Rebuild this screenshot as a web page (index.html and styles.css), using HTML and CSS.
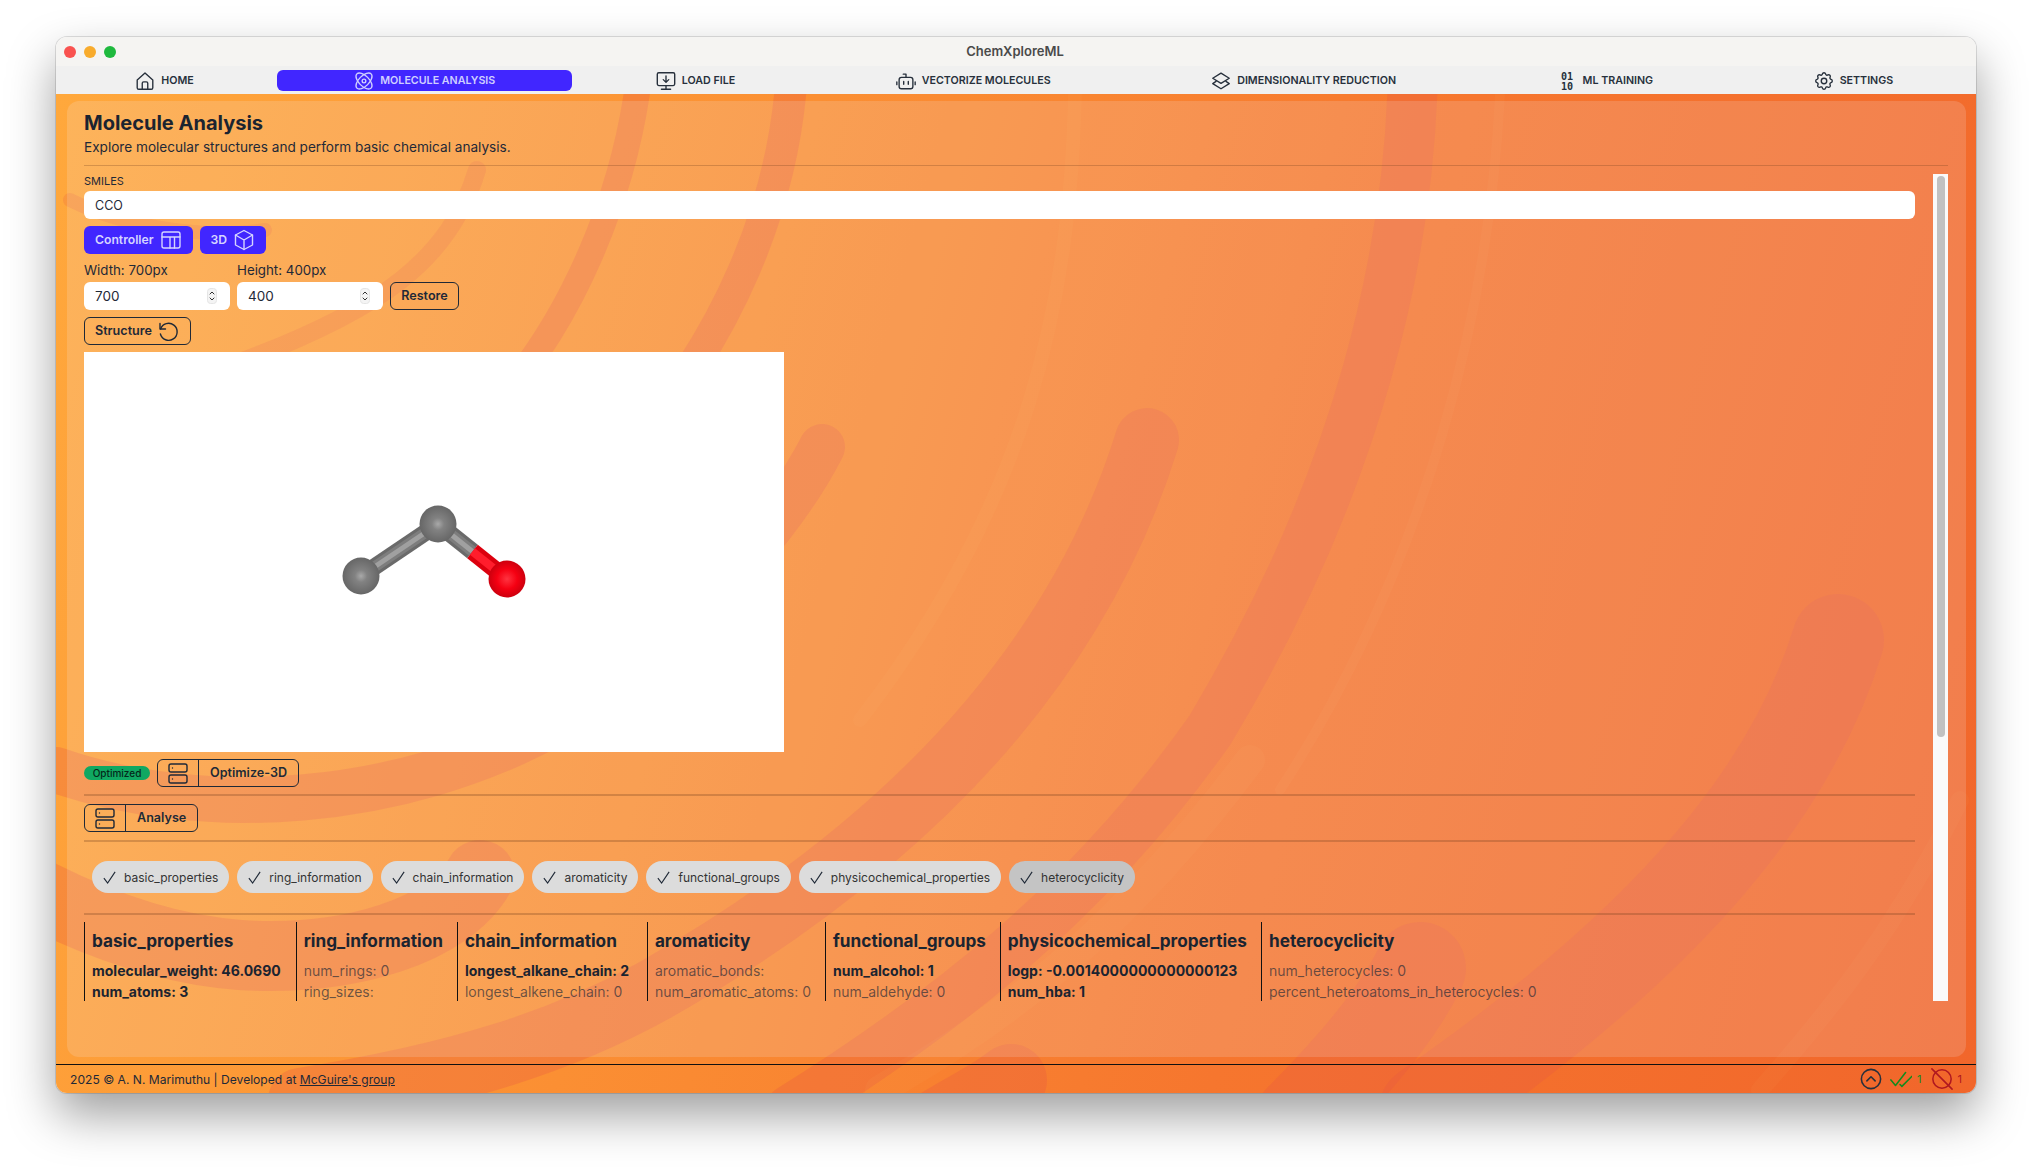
FILE: index.html
```html
<!DOCTYPE html>
<html lang="en">
<head>
<meta charset="utf-8">
<title>ChemXploreML</title>
<link rel="stylesheet" href="styles.css">
</head>
<body>
<div class="window">
  <header class="titlebar">
    <div class="lights"><span class="light red"></span><span class="light amber"></span><span class="light green"></span></div>
    <div class="wintitle">ChemXploreML</div>
  </header>
  <nav class="tabs">
    <a class="tab">
      <svg class="tab-ico" viewBox="0 0 24 24"><path d="M3.500 11 12 3.200 20.500 11v8.300a1.700 1.700 0 0 1-1.700 1.700H5.200a1.700 1.700 0 0 1-1.700-1.700z"/><path d="M9 21v-6.500a1.500 1.500 0 0 1 1.500-1.500h3a1.500 1.500 0 0 1 1.500 1.500V21"/></svg>
      <span>Home</span>
    </a>
    <a class="tab active">
      <svg class="tab-ico" viewBox="0 0 24 24"><ellipse cx="12" cy="12" rx="5.600" ry="11" transform="rotate(45 12 12)"/><ellipse cx="12" cy="12" rx="5.600" ry="11" transform="rotate(-45 12 12)"/><circle cx="12" cy="12" r="2"/></svg>
      <span>Molecule Analysis</span>
    </a>
    <a class="tab">
      <svg class="tab-ico" viewBox="0 0 24 24"><rect x="2.500" y="3" width="19" height="14" rx="1.600"/><path d="M12 6.500v6.500M9 10.500l3 3 3-3M12 17v4M7 21h10"/></svg>
      <span>Load file</span>
    </a>
    <a class="tab">
      <svg class="tab-ico" viewBox="0 0 24 24"><rect x="4.500" y="8" width="15" height="12.500" rx="2.500"/><path d="M12 8V4.500H9M2 13v3M22 13v3M9.500 12.500v3M14.500 12.500v3"/></svg>
      <span>Vectorize Molecules</span>
    </a>
    <a class="tab">
      <svg class="tab-ico" viewBox="0 0 24 24"><path d="M12 3.500 21 9l-9 5.500L3 9z"/><path d="M6.600 12.400 3 14.800l9 5.700 9-5.700-3.600-2.400"/></svg>
      <span>Dimensionality Reduction</span>
    </a>
    <a class="tab">
      <svg class="tab-ico" viewBox="0 0 24 24"><text class="bin" x="12" y="10.500">01</text><text class="bin" x="12" y="21.500">10</text></svg>
      <span>ML Training</span>
    </a>
    <a class="tab">
      <svg class="tab-ico" viewBox="0 0 24 24"><path d="M10.300 4.300c.4-1.800 3-1.800 3.400 0a1.700 1.700 0 0 0 2.600 1.100c1.500-.9 3.300.8 2.400 2.400a1.700 1.700 0 0 0 1 2.500c1.800.5 1.800 3 0 3.400a1.700 1.700 0 0 0-1 2.600c.9 1.500-.9 3.300-2.400 2.400a1.700 1.700 0 0 0-2.600 1c-.4 1.800-3 1.800-3.400 0a1.700 1.700 0 0 0-2.600-1c-1.500.9-3.300-.9-2.400-2.400a1.700 1.700 0 0 0-1-2.600c-1.800-.4-1.800-3 0-3.400a1.700 1.700 0 0 0 1-2.500c-.9-1.600.9-3.300 2.400-2.400a1.700 1.700 0 0 0 2.600-1.100z"/><circle cx="12" cy="12" r="3"/></svg>
      <span>Settings</span>
    </a>
  </nav>
  <div class="stage">
    <svg class="swirls" viewBox="56 94 1920 999" preserveAspectRatio="none" aria-hidden="true">
      <g class="sw-dark">
        <path stroke-width="64" d="M1147 440C1085 640 935 830 655 990 565 1040 460 1075 300 1100"/>
        <path stroke-width="92" d="M1838 640C1795 780 1685 930 1425 1110"/>
        <path stroke-width="50" d="M1413 70C1410 250 1360 480 1210 730 1090 900 950 1010 790 1110"/>
        <path stroke-width="26" d="M640 70C625 200 570 320 500 400"/>
        <path stroke-width="32" d="M792 70C785 200 730 340 620 460"/>
        <path stroke-width="46" d="M822 447C785 520 685 640 560 720 400 810 200 820 56 770"/>
        <path stroke-width="70" d="M480 875C450 930 350 962 240 955 170 950 100 925 40 895"/>
        <path stroke-width="92" d="M1420 968C1395 1020 1340 1080 1300 1120"/>
        <path stroke-width="72" d="M1011 1080C985 1100 960 1110 930 1130"/>
      </g>
      <g class="sw-faint">
        <path stroke-width="18" d="M477 170C450 260 380 310 240 362"/>
        <path stroke-width="14" d="M70 200C120 225 200 240 265 230"/>
      </g>
      <g class="sw-light">
        <path stroke-width="14" d="M1075 94C1070 300 1030 500 860 720"/>
        <path stroke-width="10" d="M1500 94C1490 300 1430 560 1280 790"/>
        <path stroke-width="18" d="M1960 800C1900 920 1840 1000 1760 1090"/>
        <path stroke-width="30" d="M1250 760C1130 920 1020 1010 880 1090"/>
      </g>
    </svg>
    <main class="panel">
      <h1 class="page-title">Molecule Analysis</h1>
      <p class="page-sub">Explore molecular structures and perform basic chemical analysis.</p>
      <hr class="rule">
      <div class="scroll-wrap">
        <div class="scroll">
          <label class="mini-label">SMILES</label>
          <input class="smiles" type="text" value="CCO">
          <div class="row top-btns">
            <button class="btn primary">Controller
              <svg class="btn-ico" viewBox="0 0 24 24"><rect x="3" y="4" width="18" height="16" rx="2"/><path d="M3 9h18M11 9v11M15.500 9v11"/></svg>
            </button>
            <button class="btn primary">3D
              <svg class="btn-ico" viewBox="0 0 24 24"><path d="M12 2.500 20.500 7v10L12 21.500 3.500 17V7z"/><path d="M3.500 7 12 12l8.500-5M12 12v9.500"/></svg>
            </button>
          </div>
          <div class="dims">
            <div class="dim">
              <label class="dim-label">Width: 700px</label>
              <div class="num"><input type="text" value="700"><svg class="spin" viewBox="0 0 10 16"><rect x=".5" y=".5" width="9" height="15" rx="3"/><path d="M3 6l2-2 2 2M3 10l2 2 2-2"/></svg></div>
            </div>
            <div class="dim">
              <label class="dim-label">Height: 400px</label>
              <div class="num"><input type="text" value="400"><svg class="spin" viewBox="0 0 10 16"><rect x=".5" y=".5" width="9" height="15" rx="3"/><path d="M3 6l2-2 2 2M3 10l2 2 2-2"/></svg></div>
            </div>
            <button class="btn outline">Restore</button>
          </div>
          <div class="row">
            <button class="btn outline structure">Structure
              <svg class="btn-ico dark" viewBox="0 0 24 24"><path d="M4 4.500v5.500h5.500"/><path d="M4.600 10a8.500 8.500 0 1 1-.2 5"/></svg>
            </button>
          </div>
          <div class="viewer">
            <svg class="mol" viewBox="0 0 700 400">
              <defs>
                <radialGradient id="c" cx=".5" cy=".5" r=".55"><stop offset="0" stop-color="#a9a9a9"/><stop offset=".3" stop-color="#828282"/><stop offset="1" stop-color="#626262"/></radialGradient>
                <radialGradient id="o" cx=".5" cy=".5" r=".55"><stop offset="0" stop-color="#ff3340"/><stop offset=".5" stop-color="#f50012"/><stop offset="1" stop-color="#c4000d"/></radialGradient>
              </defs>
              <g class="bond b1"><path d="M277 224 354 172"/><path d="M354 172 388.500 199.500"/></g>
              <g class="bond b2"><path d="M277 224 354 172"/><path d="M354 172 388.500 199.500"/></g>
              <g class="bond b3"><path d="M277 224 354 172"/><path d="M354 172 388.500 199.500"/></g>
              <path class="bond-red r-a" d="M388.500 199.500 423 227"/>
              <path class="bond-red r-b" d="M388.500 199.500 423 227"/>
              <circle cx="277" cy="224" r="18.500" fill="url(#c)"/>
              <circle cx="354" cy="172" r="18.500" fill="url(#c)"/>
              <circle cx="423" cy="227" r="18.500" fill="url(#o)"/>
            </svg>
          </div>
          <div class="row opt">
            <span class="badge">Optimized</span>
            <button class="join">
              <span class="join-ico"><svg class="srv" viewBox="0 0 24 24"><rect x="3" y="3" width="18" height="8" rx="2"/><rect x="3" y="14" width="18" height="8" rx="2"/><path d="M6.500 7h.01M6.500 18h.01"/></svg></span>
              <span class="join-text">Optimize-3D</span>
            </button>
          </div>
          <hr class="rule thick r1">
          <div class="row">
            <button class="join">
              <span class="join-ico"><svg class="srv" viewBox="0 0 24 24"><rect x="3" y="3" width="18" height="8" rx="2"/><rect x="3" y="14" width="18" height="8" rx="2"/><path d="M6.500 7h.01M6.500 18h.01"/></svg></span>
              <span class="join-text">Analyse</span>
            </button>
          </div>
          <hr class="rule thick r2">
          <div class="chips">
            <span class="chip"><svg viewBox="0 0 24 24"><path d="M3 13l6 8L21 3"/></svg>basic_properties</span>
            <span class="chip"><svg viewBox="0 0 24 24"><path d="M3 13l6 8L21 3"/></svg>ring_information</span>
            <span class="chip"><svg viewBox="0 0 24 24"><path d="M3 13l6 8L21 3"/></svg>chain_information</span>
            <span class="chip"><svg viewBox="0 0 24 24"><path d="M3 13l6 8L21 3"/></svg>aromaticity</span>
            <span class="chip"><svg viewBox="0 0 24 24"><path d="M3 13l6 8L21 3"/></svg>functional_groups</span>
            <span class="chip"><svg viewBox="0 0 24 24"><path d="M3 13l6 8L21 3"/></svg>physicochemical_properties</span>
            <span class="chip last"><svg viewBox="0 0 24 24"><path d="M3 13l6 8L21 3"/></svg>heterocyclicity</span>
          </div>
          <hr class="rule thick r3">
          <div class="stats">
            <section class="stat"><h2>basic_properties</h2><p class="on">molecular_weight: 46.0690</p><p class="on">num_atoms: 3</p></section>
            <section class="stat"><h2>ring_information</h2><p>num_rings: 0</p><p>ring_sizes:</p></section>
            <section class="stat"><h2>chain_information</h2><p class="on">longest_alkane_chain: 2</p><p>longest_alkene_chain: 0</p></section>
            <section class="stat"><h2>aromaticity</h2><p>aromatic_bonds:</p><p>num_aromatic_atoms: 0</p></section>
            <section class="stat"><h2>functional_groups</h2><p class="on">num_alcohol: 1</p><p>num_aldehyde: 0</p></section>
            <section class="stat"><h2>physicochemical_properties</h2><p class="on">logp: -0.0014000000000000123</p><p class="on">num_hba: 1</p></section>
            <section class="stat"><h2>heterocyclicity</h2><p>num_heterocycles: 0</p><p>percent_heteroatoms_in_heterocycles: 0</p></section>
          </div>
        </div>
        <div class="scrollbar"><div class="thumb"></div></div>
      </div>
    </main>
    <footer class="foot">
      <div class="credit">2025 © A. N. Marimuthu | Developed at <a class="link">McGuire's group</a></div>
      <div class="foot-right">
        <svg class="f-ico up" viewBox="0 0 24 24"><circle cx="12" cy="12" r="10.500"/><path d="M7.500 14 12 9.500l4.500 4.500"/></svg>
        <svg class="f-ico ok" viewBox="0 0 24 24"><path d="M1 13l5 6L17 5M11 18l2 2L24 9"/></svg>
        <span class="count ok-c">1</span>
        <svg class="f-ico no" viewBox="0 0 24 24"><circle cx="12" cy="12" r="10"/><path d="M1 1 23 23"/></svg>
        <span class="count no-c">1</span>
      </div>
    </footer>
  </div>
</div>
</body>
</html>
```
FILE: styles.css
```css
* { box-sizing: border-box; }
html, body { margin: 0; height: 100%; }
body {
  padding: 37px 56px 74px;
  background: #fff;
  font-family: Inter, "Noto Sans", sans-serif;
  color: #1f2937;
  overflow: hidden;
}
.window {
  width: 1920px;
  height: 1056px;
  display: flex;
  flex-direction: column;
  border-radius: 11px;
  overflow: hidden;
  box-shadow: 0 0 0 1px rgba(0,0,0,.12), 0 22px 48px rgba(0,0,0,.38);
}
.titlebar {
  height: 29px;
  flex: none;
  background: #f5f4f2;
  display: flex;
  align-items: center;
  justify-content: center;
  position: relative;
}
.lights { position: absolute; left: 8px; top: 9px; display: flex; gap: 8px; }
.light { width: 12px; height: 12px; border-radius: 50%; }
.red { background: #f9524f; }
.amber { background: #f8ab2c; }
.green { background: #1fb93e; }
.wintitle { font-size: 13px; font-weight: 600; color: #4a4a4a; margin-right: 2px; margin-bottom: 1px; }

.tabs {
  height: 28px;
  flex: none;
  display: flex;
  gap: 6px;
  padding: 4px 6px 3px 1.500px;
  background: #f0f0f0;
}
.tab {
  flex: 1 1 auto;
  display: flex;
  align-items: center;
  justify-content: center;
  gap: 5px;
  border-radius: 6px;
  font-size: 10.700px;
  font-weight: 600;
  text-transform: uppercase;
  white-space: nowrap;
  color: #27303c;
}
.tab.active { background: #4126ff; color: #cfcfff; }
.tab-ico { width: 22px; height: 22px; fill: none; stroke: currentColor; stroke-width: 1.500; stroke-linecap: round; stroke-linejoin: round; flex: none; }
.bin { font: 700 11px "DejaVu Sans Mono", monospace; text-anchor: middle; fill: currentColor; stroke: none; }

.stage {
  position: relative;
  flex: 1;
  min-height: 0;
  display: flex;
  flex-direction: column;
  background: linear-gradient(105deg, #ffa83c 0%, #fb8f33 35%, #f6762e 65%, #f1662b 100%);
}
.swirls { position: absolute; inset: 0; width: 100%; height: 100%; pointer-events: none; }
.sw-dark path { fill: none; stroke: rgba(232,88,66,.3); stroke-linecap: round; }
.sw-faint path { fill: none; stroke: rgba(232,88,66,.2); stroke-linecap: round; }
.sw-light path { fill: none; stroke: rgba(255,200,120,.05); stroke-linecap: round; }

.panel {
  position: relative;
  flex: 1;
  min-height: 0;
  margin: 7px 10px 7px 11px;
  padding: 8px 18px 56px 17px;
  display: flex;
  flex-direction: column;
  border-radius: 12px;
  background: rgba(240,240,255,.16);
}
.page-title { margin: 0; font-size: 20px; line-height: 28px; font-weight: 700; color: #1b2430; }
.page-sub { margin: 0; font-size: 13.600px; line-height: 20px; }
.rule { border: 0; border-top: 1px solid rgba(110,60,30,.28); margin: 8px 0; flex: none; }
.scroll-wrap { flex: 1; min-height: 0; display: flex; }
.scroll {
  flex: 1;
  min-width: 0;
  overflow: hidden;
  padding-right: 18px;
  display: flex;
  flex-direction: column;
}
.scrollbar { width: 15px; flex: none; background: #fafafa; padding: 2px 3px 0 4px; }
.thumb { height: 561px; background: #c1c1c1; border-radius: 4px; }

.mini-label { font-size: 11px; line-height: 14px; margin-bottom: 3px; flex: none; }
.smiles {
  flex: none;
  height: 28px;
  border: 0;
  border-radius: 6px;
  background: #fff;
  padding: 0 11px;
  font: 400 12.500px Inter, sans-serif;
  color: #1f2937;
}
.row { display: flex; align-items: center; gap: 7px; flex: none; margin-top: 7px; }
.btn {
  height: 28px;
  display: inline-flex;
  align-items: center;
  justify-content: center;
  gap: 5px;
  padding: 0 9px 1px 10px;
  border-radius: 6px;
  border: 1px solid transparent;
  font: 600 12.200px Inter, sans-serif;
  white-space: nowrap;
}
.primary { background: #4126ff; color: #d5d5ff; }
.outline { background: transparent; border-color: #1f2937; color: #1f2937; font-size: 12.600px; }
.structure { width: 107px; padding: 0 0 1px; gap: 4px; }
.btn-ico { width: 24px; height: 24px; fill: none; stroke: #d5d5ff; stroke-width: 1.400; stroke-linecap: round; stroke-linejoin: round; flex: none; }
.btn-ico.dark { stroke: #1f2937; }

.dims { display: flex; align-items: flex-end; gap: 7px; margin-top: 8px; flex: none; }
.dim { display: flex; flex-direction: column; gap: 4px; width: 146px; }
.dim-label { font-size: 13.300px; line-height: 16px; }
.num { height: 28px; display: flex; align-items: center; background: #fff; border-radius: 6px; padding: 0 13px 0 11px; }
.num input { flex: 1; min-width: 0; border: 0; outline: 0; padding: 0; background: transparent; font: 400 13.500px Inter, sans-serif; color: #1f2937; }
.spin { width: 10px; height: 16px; fill: #f4f4f4; stroke: #333; stroke-width: 1; stroke-linecap: round; stroke-linejoin: round; }
.spin rect { stroke: #e5e5e5; }
.dims .outline { width: 69px; padding: 0 0 1px; }

.viewer { width: 700px; height: 400px; background: #fff; margin-top: 7px; flex: none; }
.mol { display: block; width: 100%; height: 100%; }
.bond path, .bond-red { fill: none; }
.b1 path { stroke: #6a6a6a; stroke-width: 17; }
.b2 path { stroke: #7d7d7d; stroke-width: 11; }
.b3 path { stroke: #a0a0a0; stroke-width: 5; }
.r-a { stroke: #dc000e; stroke-width: 17; }
.r-b { stroke: #ff1d2c; stroke-width: 8; }

.badge { width: 66px; height: 14px; border-radius: 7px; background: #10a862; color: #04291a; font-size: 10px; font-weight: 500; line-height: 14px; text-align: center; }
.join {
  height: 28px;
  display: inline-flex;
  align-items: stretch;
  padding: 0;
  background: transparent;
  border: 1px solid #1f2937;
  border-radius: 6px;
  font: 600 12.600px Inter, sans-serif;
  color: #1f2937;
}
.join-ico { width: 41px; display: flex; align-items: center; justify-content: center; border-right: 1px solid #1f2937; }
.join-text { display: flex; align-items: center; padding: 0 11px 1px; }
.srv { width: 24px; height: 24px; fill: none; stroke: #1f2937; stroke-width: 1.400; stroke-linecap: round; }
.thick { border-top-width: 2px; margin: 0; }
.r1 { margin-top: 7px; margin-bottom: 1px; }
.r2 { margin-top: 8px; }
.chips { display: flex; gap: 8px; padding: 19px 0 20px 8px; flex: none; }
.chip {
  height: 32px;
  display: inline-flex;
  align-items: center;
  gap: 7px;
  padding: 0 11px 0 10px;
  border-radius: 16px;
  background: #dcdcdc;
  font-size: 12px;
  color: #333;
  white-space: nowrap;
}
.chip svg { width: 15px; height: 15px; fill: none; stroke: #1f2937; stroke-width: 1.800; }
.chip.last { background: #c4c4c4; }
.stats { display: flex; margin-top: 7px; min-height: 471px; flex: none; }
.stat { border-left: 1px solid #111; padding: 5px 14px 0 7px; }
.stat:nth-child(1) { padding-right: 15px; }
.stat:nth-child(3) { min-width: 190px; }
.stat h2 { margin: 0 0 5px; font-size: 17.200px; line-height: 28px; font-weight: 700; color: #1b2430; white-space: nowrap; }
.stat p { margin: 0; font-size: 14px; line-height: 21px; white-space: nowrap; color: rgba(31,41,55,.66); }
.stat p.on { font-weight: 700; color: #1b2430; }

.foot {
  position: relative;
  height: 29px;
  flex: none;
  border-top: 1px solid #111;
  display: flex;
  align-items: center;
  justify-content: space-between;
  padding: 0 14px 0 14px;
}
.credit { font-size: 12.100px; }
.link { text-decoration: underline; }
.foot-right { display: flex; align-items: center; }
.f-ico { width: 22px; height: 22px; fill: none; stroke-linecap: round; stroke-linejoin: round; stroke-width: 1.700; }
.up { stroke: #27303c; margin-right: 8px; }
.ok { stroke: #148a1e; margin-right: 5px; }
.no { stroke: #b01820; margin: 0 5px 0 9px; }
.count { font-size: 11px; }
.ok-c { color: #148a1e; }
.no-c { color: #b01820; }
```
